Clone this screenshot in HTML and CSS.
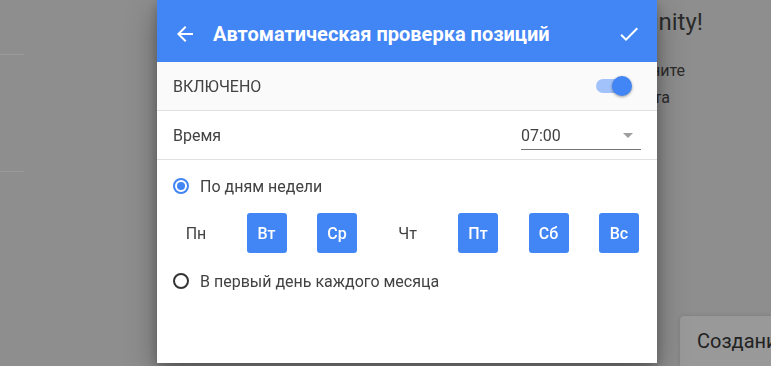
FILE: index.html
```html
<!DOCTYPE html>
<html lang="ru">
<head>
    <meta charset="UTF-8">
    <meta name="viewport" content="width=device-width, initial-scale=1.0">
    <title>Автоматическая проверка позиций</title>
    <link rel="stylesheet" href="styles.css">
</head>
<body>
    <div class="page">
        <aside class="sidebar">
            <div class="sidebar-line"></div>
            <div class="sidebar-line"></div>
        </aside>
        <main class="main">
            <h1 class="welcome-title">Добро пожаловать в Infinity!</h1>
            <p class="welcome-line first">Чтобы начать работу, создайте и сохраните</p>
            <p class="welcome-line second">настройки первого проекта</p>
            <button class="create-btn">Создание проекта</button>
        </main>
    </div>

    <div class="overlay">
        <div class="dialog">
            <header class="dialog-header">
                <svg class="icon" viewBox="0 0 24 24"><path d="M20 11H7.83l5.59-5.59L12 4l-8 8 8 8 1.41-1.41L7.83 13H20v-2z"/></svg>
                <span class="dialog-title">Автоматическая проверка позиций</span>
                <svg class="icon" viewBox="0 0 24 24"><path d="M9 16.17L4.83 12l-1.42 1.41L9 19 21 7l-1.41-1.41z"/></svg>
            </header>

            <div class="row row-enabled">
                <span>ВКЛЮЧЕНО</span>
                <div class="switch">
                    <div class="switch-track"></div>
                    <div class="switch-thumb"></div>
                </div>
            </div>

            <div class="row">
                <span>Время</span>
                <div class="time-select">
                    <span>07:00</span>
                    <span class="select-arrow"></span>
                </div>
            </div>

            <div class="schedule">
                <label class="radio-row">
                    <span class="radio checked"></span>
                    <span>По дням недели</span>
                </label>
                <div class="days">
                    <span class="day">Пн</span>
                    <span class="day on">Вт</span>
                    <span class="day on">Ср</span>
                    <span class="day">Чт</span>
                    <span class="day on">Пт</span>
                    <span class="day on">Сб</span>
                    <span class="day on">Вс</span>
                </div>
                <label class="radio-row second">
                    <span class="radio"></span>
                    <span>В первый день каждого месяца</span>
                </label>
            </div>
        </div>
    </div>
</body>
</html>
```

FILE: styles.css
```css
* {
    box-sizing: border-box;
}
body {
    margin: 0;
    height: 366px;
    overflow: hidden;
    font-family: Roboto, "Noto Sans", sans-serif;
    background-color: #8e8e8e;
}

/* page behind the dialog */
.page {
    display: flex;
    height: 366px;
}
.sidebar {
    width: 24px;
    padding-top: 54px;
    display: flex;
    flex-direction: column;
    gap: 116px;
}
.sidebar-line {
    height: 1px;
    background-color: #9a9a9a;
}
.main {
    flex: 1;
    display: flex;
    flex-direction: column;
    align-items: flex-end;
    color: #2b2b2b;
}
.welcome-title {
    margin: 6px 68px 0 0;
    font-size: 24px;
    font-weight: 400;
    line-height: 32px;
    white-space: nowrap;
}
.welcome-line {
    margin: 0;
    font-size: 16px;
    line-height: 27px;
    white-space: nowrap;
}
.welcome-line.first {
    margin: 19px 86px 0 0;
}
.welcome-line.second {
    margin-right: 101px;
}
.create-btn {
    margin-top: auto;
    width: 91px;
    height: 50px;
    padding: 0 0 0 17px;
    border: none;
    border-radius: 4px 0 0 0;
    background-color: #999;
    box-shadow: 0 0 4px rgba(0, 0, 0, 0.15);
    color: #222;
    font-family: inherit;
    font-size: 20px;
    text-align: left;
    white-space: nowrap;
    overflow: hidden;
}

/* dialog */
.overlay {
    position: fixed;
    inset: 0;
}
.dialog {
    width: 500px;
    height: 363px;
    margin-left: 157px;
    background: #fff;
    box-shadow: 0 10px 28px rgba(0, 0, 0, 0.35), 0 4px 10px rgba(0, 0, 0, 0.2);
    display: flex;
    flex-direction: column;
    color: #424242;
    font-size: 16px;
}
.dialog-header {
    height: 62px;
    padding: 6px 16px 0;
    display: flex;
    align-items: center;
    gap: 16px;
    background-color: #4285f4;
    color: #fff;
}
.icon {
    width: 24px;
    height: 24px;
    fill: #fff;
    flex-shrink: 0;
}
.dialog-title {
    flex: 1;
    font-size: 20px;
    font-weight: 700;
}
.row {
    height: 49px;
    padding: 0 16px;
    display: flex;
    align-items: center;
    justify-content: space-between;
    border-bottom: 1px solid #e0e0e0;
}
.row-enabled {
    background-color: #fafafa;
}
.switch {
    position: relative;
    width: 36px;
    height: 20px;
    margin-right: 9px;
}
.switch-track {
    position: absolute;
    left: 0;
    top: 3px;
    width: 34px;
    height: 14px;
    border-radius: 7px;
    background-color: #a1c2fa;
}
.switch-thumb {
    position: absolute;
    left: 16px;
    top: 0;
    width: 20px;
    height: 20px;
    border-radius: 50%;
    background-color: #4285f4;
    box-shadow: 0 1px 3px rgba(0, 0, 0, 0.4);
}
.time-select {
    width: 120px;
    height: 28px;
    margin-top: 1px;
    display: flex;
    align-items: center;
    justify-content: space-between;
    border-bottom: 1px solid #757575;
}
.select-arrow {
    margin-right: 8px;
    border-left: 5px solid transparent;
    border-right: 5px solid transparent;
    border-top: 5px solid #9e9e9e;
}
.schedule {
    padding: 14px 16px 0;
}
.radio-row {
    height: 24px;
    display: flex;
    align-items: center;
    gap: 11px;
}
.radio-row.second {
    margin-top: 16px;
}
.radio {
    width: 16px;
    height: 16px;
    border: 2px solid #333;
    border-radius: 50%;
    display: flex;
    align-items: center;
    justify-content: center;
}
.radio.checked {
    border-color: #4285f4;
}
.radio.checked::after {
    content: "";
    width: 8px;
    height: 8px;
    border-radius: 50%;
    background-color: #4285f4;
}
.days {
    margin: 15px 2px 0 3px;
    display: flex;
    justify-content: space-between;
}
.day {
    width: 40px;
    height: 40px;
    border-radius: 3px;
    display: flex;
    align-items: center;
    justify-content: center;
}
.day.on {
    background-color: #4285f4;
    color: #fff;
    font-weight: 500;
}
```
